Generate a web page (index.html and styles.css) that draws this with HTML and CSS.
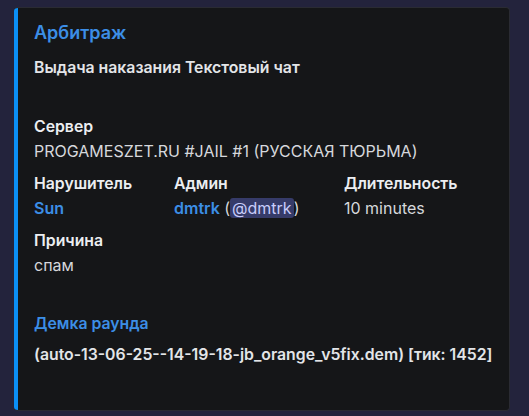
FILE: index.html
```html
<!DOCTYPE html>
<html lang="ru">
<head>
<meta charset="utf-8">
<link rel="stylesheet" href="styles.css">
</head>
<body>
<div class="embed">
  <div class="bar"></div>
  <div class="content">
    <div class="title">Арбитраж</div>
    <div class="desc">Выдача наказания Текстовый чат</div>
    <div class="fields">
      <div class="field full">
        <div class="fname">Сервер</div>
        <div class="fvalue">PROGAMESZET.RU #JAIL #1 (РУССКАЯ ТЮРЬМА)</div>
      </div>
      <div class="field">
        <div class="fname">Нарушитель</div>
        <div class="fvalue"><span class="link">Sun</span></div>
      </div>
      <div class="field">
        <div class="fname">Админ</div>
        <div class="fvalue"><span class="link">dmtrk</span> (<span class="mention">@dmtrk</span>)</div>
      </div>
      <div class="field">
        <div class="fname">Длительность</div>
        <div class="fvalue">10 minutes</div>
      </div>
      <div class="field full">
        <div class="fname">Причина</div>
        <div class="fvalue">спам</div>
      </div>
      <div class="field full demo">
        <div class="fname link">Демка раунда</div>
        <div class="fvalue strong">(auto-13-06-25--14-19-18-jb_orange_v5fix.dem) [тик: 1452]</div>
      </div>
    </div>
  </div>
</div>
</body>
</html>
```
FILE: styles.css
```css
* { box-sizing: border-box; }
html, body { margin: 0; height: 100%; }
body {
  background: #23233c;
  padding: 7px 19px 5px 14px;
  font-family: "Inter", "Noto Sans", sans-serif;
}
.embed {
  display: flex;
  height: 404px;
  background: #151618;
  border: 1px solid #2a2b33;
  border-left: none;
  border-radius: 4px;
  overflow: hidden;
}
.bar {
  width: 4px;
  flex: none;
  background: #0b8ff6;
}
.content {
  flex: 1;
  padding: 14px 16px 0 16px;
}
.title {
  font-size: 18px;
  line-height: 22px;
  font-weight: 600;
  color: #3c8ee6;
}
.desc {
  margin-top: 14px;
  font-size: 15.8px;
  line-height: 20px;
  font-weight: 600;
  color: #e3e5e8;
}
.fields {
  margin-top: 39px;
  display: grid;
  grid-template-columns: 140px 170px 1fr;
  row-gap: 13px;
}
.field.full { grid-column: 1 / -1; }
.fname {
  font-size: 15.8px;
  line-height: 20px;
  font-weight: 600;
  color: #eceef1;
}
.fvalue {
  margin-top: 4px;
  font-size: 16px;
  line-height: 20px;
  color: #d6d8dc;
}
.link { color: #3c8ee6; font-weight: 600; }
.mention {
  background: #363b69;
  color: #c9cdfb;
  border-radius: 3px;
  padding: 0 2px;
}
.demo { margin-top: 26px; }
.demo .fvalue { margin-top: 11px; font-size: 15.8px; }
.strong { font-weight: 600; color: #e3e5e8; }
```
